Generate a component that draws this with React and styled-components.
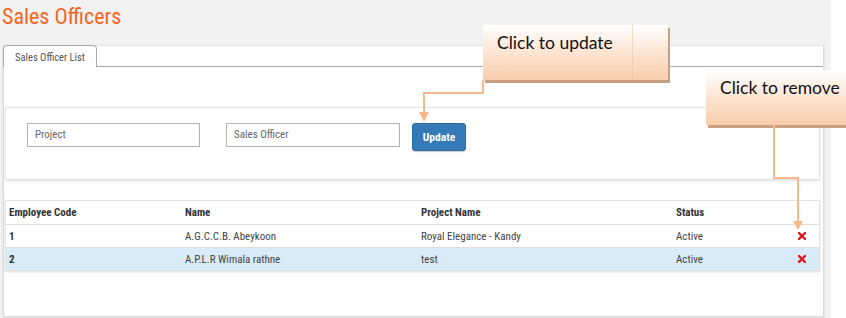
import React from "react";
import styled, { createGlobalStyle } from "styled-components";

const GlobalStyle = createGlobalStyle`
  html, body {
    margin: 0;
    padding: 0;
    background: #ffffff;
  }
  body {
    font-family: "Liberation Sans Narrow", "Roboto Condensed", "DejaVu Sans Condensed", Roboto, sans-serif;
  }
`;

const condensed = `"Liberation Sans Narrow", "Roboto Condensed", "DejaVu Sans Condensed", Roboto, sans-serif`;

const Screen = styled.div`
  position: relative;
  width: 846px;
  height: 318px;
  overflow: hidden;
`;

const Page = styled.div`
  width: 831px;
  height: 318px;
  background: #f2f2f2;
  box-sizing: border-box;
  padding: 0 7px 0 3px;
`;

const Title = styled.h1`
  margin: 0;
  height: 45px;
  box-sizing: border-box;
  padding: 4px 0 0 0;
  margin-left: -1px;
  font-family: ${condensed};
  font-weight: 400;
  font-size: 22px;
  color: #f26522;
`;

const Panel = styled.div`
  background: #ffffff;
  border-top: 1px solid #e4e4e4;
  border-right: 1px solid #dcdcdc;
  border-left: 1px solid #dcdcdc;
  height: 271px;
  box-sizing: border-box;
  box-shadow: 0 1px 2px rgba(0, 0, 0, 0.15);
`;

const TabStrip = styled.div`
  display: flex;
  height: 21px;
  border-bottom: 1px solid #a9a9a9;
  margin-top: -1px;
  margin-left: -1px;
`;

const Tab = styled.div`
  width: 94px;
  height: 22px;
  box-sizing: border-box;
  border: 1px solid #a9a9a9;
  border-bottom: none;
  border-radius: 4px 4px 0 0;
  background: #ffffff;
  font-family: ${condensed};
  font-size: 10.5px;
  color: #555;
  display: flex;
  align-items: center;
  justify-content: center;
  padding-top: 1px;
`;

const Content = styled.div`
  padding: 40px 3px 0 1px;
  display: flex;
  flex-direction: column;
  gap: 20px;
`;

const FilterBox = styled.div`
  height: 73px;
  box-sizing: border-box;
  border: 1px solid #e2e2e2;
  box-shadow: 0 1px 2px rgba(0, 0, 0, 0.12);
  padding: 15px 0 0 21px;
  display: flex;
  align-items: flex-start;
`;

const Field = styled.div`
  width: ${(p) => p.$w}px;
  height: 24px;
  box-sizing: border-box;
  border: 1px solid #b4b4b4;
  margin-right: ${(p) => p.$gap}px;
  font-family: ${condensed};
  font-size: 11px;
  color: #666;
  padding: 4px 0 0 7px;
`;

const Button = styled.button`
  width: 54px;
  height: 28px;
  border: 1px solid #2e6da4;
  border-radius: 3px;
  background: #337ab7;
  color: #ffffff;
  font-family: ${condensed};
  font-size: 11.5px;
  font-weight: 700;
  padding: 0;
  box-shadow: 0 1px 1px rgba(0, 0, 0, 0.2);
`;

const TableBox = styled.div`
  border: 1px solid #e2e2e2;
  box-shadow: 0 1px 2px rgba(0, 0, 0, 0.15);
`;

const Row = styled.div`
  display: grid;
  grid-template-columns: 176px 236px 255px 122px 1fr;
  align-items: center;
  height: ${(p) => (p.$head ? 23 : 22)}px;
  padding-left: 3px;
  border-top: ${(p) => (p.$head ? "none" : "1px solid #dedede")};
  background: ${(p) => (p.$active ? "#d9ebf6" : "#ffffff")};
  font-family: ${condensed};
  font-size: 11px;
  font-weight: ${(p) => (p.$head ? 700 : 400)};
  color: ${(p) => (p.$head ? "#333" : "#444")};
`;

const Code = styled.span`
  font-weight: 700;
  color: #333;
`;

const Callout = styled.div`
  position: absolute;
  left: ${(p) => p.$x}px;
  top: ${(p) => p.$y}px;
  width: ${(p) => p.$w}px;
  height: 55px;
  box-sizing: border-box;
  padding: 7px 0 0 14px;
  background: linear-gradient(#ffffff 0%, #fde7d6 45%, #f9cdab 100%);
  box-shadow: 2px 3px 0 #c9a081;
  font-family: "Lato", "Open Sans", sans-serif;
  font-size: 17.5px;
  color: #111;
  white-space: nowrap;
  z-index: 2;
`;

const Divider = styled.span`
  position: absolute;
  top: 0;
  bottom: 0;
  left: ${(p) => p.$x}px;
  width: 1px;
  background: rgba(220, 190, 165, 0.45);
`;

const Connectors = styled.svg`
  position: absolute;
  left: 0;
  top: 0;
  pointer-events: none;
  z-index: 3;
`;

const RemoveIcon = () => (
  <svg width="8" height="8" viewBox="0 0 8 8">
    <path d="M1 1L7 7M7 1L1 7" stroke="#e01b22" strokeWidth="2.4" strokeLinecap="square" />
  </svg>
);

const rows = [
  { code: "1", name: "A.G.C.C.B. Abeykoon", project: "Royal Elegance - Kandy", status: "Active" },
  { code: "2", name: "A.P.L.R Wimala rathne", project: "test", status: "Active", active: true },
];

export default function App() {
  return (
    <Screen>
      <GlobalStyle />
      <Page>
        <Title>Sales Officers</Title>
        <Panel>
          <TabStrip>
            <Tab>Sales Officer List</Tab>
          </TabStrip>
          <Content>
            <FilterBox>
              <Field $w={173} $gap={26}>Project</Field>
              <Field $w={174} $gap={12}>Sales Officer</Field>
              <Button>Update</Button>
            </FilterBox>
            <TableBox>
              <Row $head>
                <span>Employee Code</span>
                <span>Name</span>
                <span>Project Name</span>
                <span>Status</span>
                <span />
              </Row>
              {rows.map((r) => (
                <Row key={r.code} $active={r.active}>
                  <Code>{r.code}</Code>
                  <span>{r.name}</span>
                  <span>{r.project}</span>
                  <span>{r.status}</span>
                  <span style={{ display: "flex" }}>
                    <RemoveIcon />
                  </span>
                </Row>
              ))}
            </TableBox>
          </Content>
        </Panel>
      </Page>

      <Callout $x={483} $y={25} $w={185}>
        Click to update
        <Divider $x={149} />
      </Callout>
      <Callout $x={706} $y={70} $w={150}>
        Click to remove
      </Callout>
      <Connectors width="846" height="318">
        <g stroke="#f7b98b" strokeWidth="2" fill="none">
          <polyline points="483,80 483,93 424,93 424,113" />
          <polyline points="774,125 774,178 798,178 798,222" />
        </g>
        <g fill="#f7b98b">
          <polygon points="419,112 429,112 424,122" />
          <polygon points="793,221 803,221 798,230" />
        </g>
      </Connectors>
    </Screen>
  );
}
